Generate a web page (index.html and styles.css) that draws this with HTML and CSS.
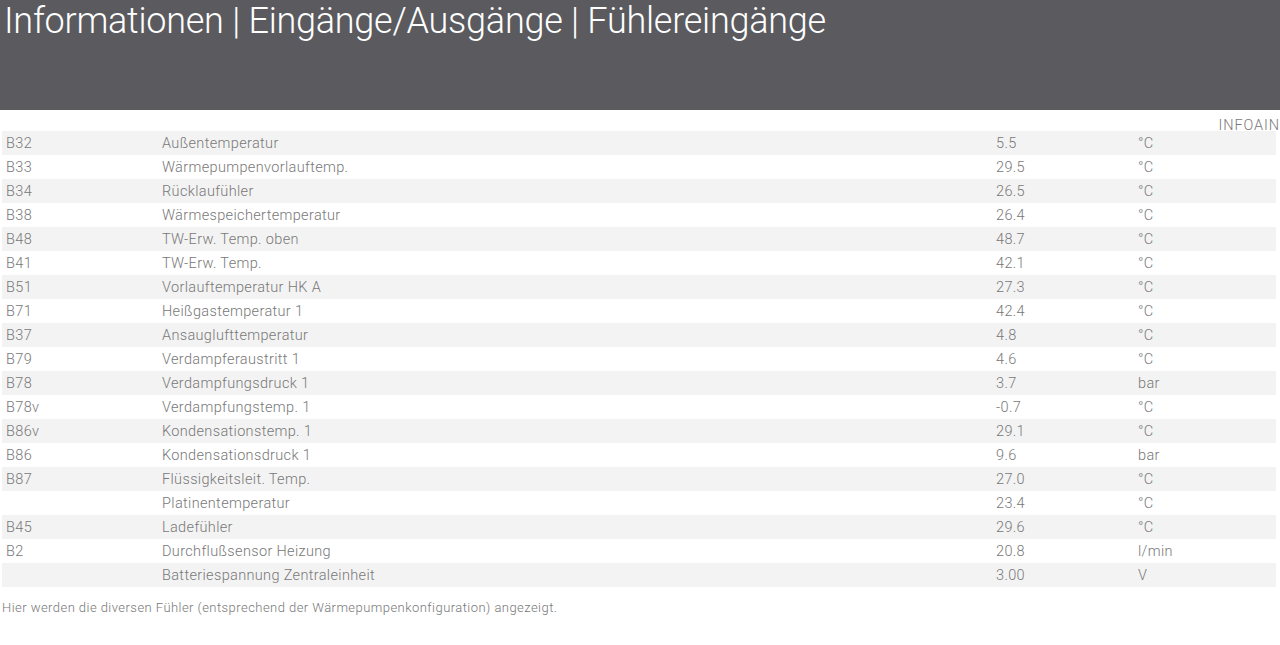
FILE: index.html
```html
<!DOCTYPE html>
<html lang="de">
<head>
<meta charset="utf-8">
<title>Fühlereingänge</title>
<link rel="stylesheet" href="styles.css">
</head>
<body>
<header class="page-header">
  <h1 class="page-title">Informationen | Eingänge/Ausgänge | Fühlereingänge</h1>
</header>
<main class="content">
  <div class="page-code">INFOAIN</div>
  <div class="sensor-table">
    <div class="row"><span class="c-id">B32</span><span class="c-name">Außentemperatur</span><span class="c-val">5.5</span><span class="c-unit">°C</span></div>
    <div class="row"><span class="c-id">B33</span><span class="c-name">Wärmepumpenvorlauftemp.</span><span class="c-val">29.5</span><span class="c-unit">°C</span></div>
    <div class="row"><span class="c-id">B34</span><span class="c-name">Rücklaufühler</span><span class="c-val">26.5</span><span class="c-unit">°C</span></div>
    <div class="row"><span class="c-id">B38</span><span class="c-name">Wärmespeichertemperatur</span><span class="c-val">26.4</span><span class="c-unit">°C</span></div>
    <div class="row"><span class="c-id">B48</span><span class="c-name">TW-Erw. Temp. oben</span><span class="c-val">48.7</span><span class="c-unit">°C</span></div>
    <div class="row"><span class="c-id">B41</span><span class="c-name">TW-Erw. Temp.</span><span class="c-val">42.1</span><span class="c-unit">°C</span></div>
    <div class="row"><span class="c-id">B51</span><span class="c-name">Vorlauftemperatur HK A</span><span class="c-val">27.3</span><span class="c-unit">°C</span></div>
    <div class="row"><span class="c-id">B71</span><span class="c-name">Heißgastemperatur 1</span><span class="c-val">42.4</span><span class="c-unit">°C</span></div>
    <div class="row"><span class="c-id">B37</span><span class="c-name">Ansauglufttemperatur</span><span class="c-val">4.8</span><span class="c-unit">°C</span></div>
    <div class="row"><span class="c-id">B79</span><span class="c-name">Verdampferaustritt 1</span><span class="c-val">4.6</span><span class="c-unit">°C</span></div>
    <div class="row"><span class="c-id">B78</span><span class="c-name">Verdampfungsdruck 1</span><span class="c-val">3.7</span><span class="c-unit">bar</span></div>
    <div class="row"><span class="c-id">B78v</span><span class="c-name">Verdampfungstemp. 1</span><span class="c-val">-0.7</span><span class="c-unit">°C</span></div>
    <div class="row"><span class="c-id">B86v</span><span class="c-name">Kondensationstemp. 1</span><span class="c-val">29.1</span><span class="c-unit">°C</span></div>
    <div class="row"><span class="c-id">B86</span><span class="c-name">Kondensationsdruck 1</span><span class="c-val">9.6</span><span class="c-unit">bar</span></div>
    <div class="row"><span class="c-id">B87</span><span class="c-name">Flüssigkeitsleit. Temp.</span><span class="c-val">27.0</span><span class="c-unit">°C</span></div>
    <div class="row"><span class="c-id"></span><span class="c-name">Platinentemperatur</span><span class="c-val">23.4</span><span class="c-unit">°C</span></div>
    <div class="row"><span class="c-id">B45</span><span class="c-name">Ladefühler</span><span class="c-val">29.6</span><span class="c-unit">°C</span></div>
    <div class="row"><span class="c-id">B2</span><span class="c-name">Durchflußsensor Heizung</span><span class="c-val">20.8</span><span class="c-unit">l/min</span></div>
    <div class="row"><span class="c-id"></span><span class="c-name">Batteriespannung Zentraleinheit</span><span class="c-val">3.00</span><span class="c-unit">V</span></div>
  </div>
  <p class="note">Hier werden die diversen Fühler (entsprechend der Wärmepumpenkonfiguration) angezeigt.</p>
</main>
</body>
</html>
```

FILE: styles.css
```css
html, body {
  margin: 0;
  padding: 0;
  background: #ffffff;
}
body {
  font-family: Roboto, "Liberation Sans", sans-serif;
  font-weight: 300;
  color: #787878;
}
.page-header {
  background: #5b5b5f;
  height: 110px;
  box-sizing: border-box;
  padding: 1px 0 0 4px;
}
.page-title {
  margin: 0;
  font-weight: 300;
  font-size: 36px;
  line-height: 40px;
  color: #ffffff;
  letter-spacing: -0.25px;
}
.content {
  padding: 0 4px 0 2px;
}
.page-code {
  height: 21px;
  text-align: right;
  font-size: 14.5px;
  line-height: 14px;
  letter-spacing: 0.9px;
  padding-top: 9px;
  box-sizing: border-box;
  margin-right: -4px;
}
.sensor-table {
  display: flex;
  flex-direction: column;
}
.row {
  display: grid;
  grid-template-columns: 156px 834px 142px 1fr;
  height: 24px;
  align-items: center;
  font-size: 14.5px;
  letter-spacing: 0.35px;
  padding-left: 4px;
}
.row:nth-child(odd) {
  background: #f3f3f3;
}
.note {
  margin: 13px 0 0 0;
  font-size: 13px;
  letter-spacing: 0.45px;
  color: #777777;
}
```
